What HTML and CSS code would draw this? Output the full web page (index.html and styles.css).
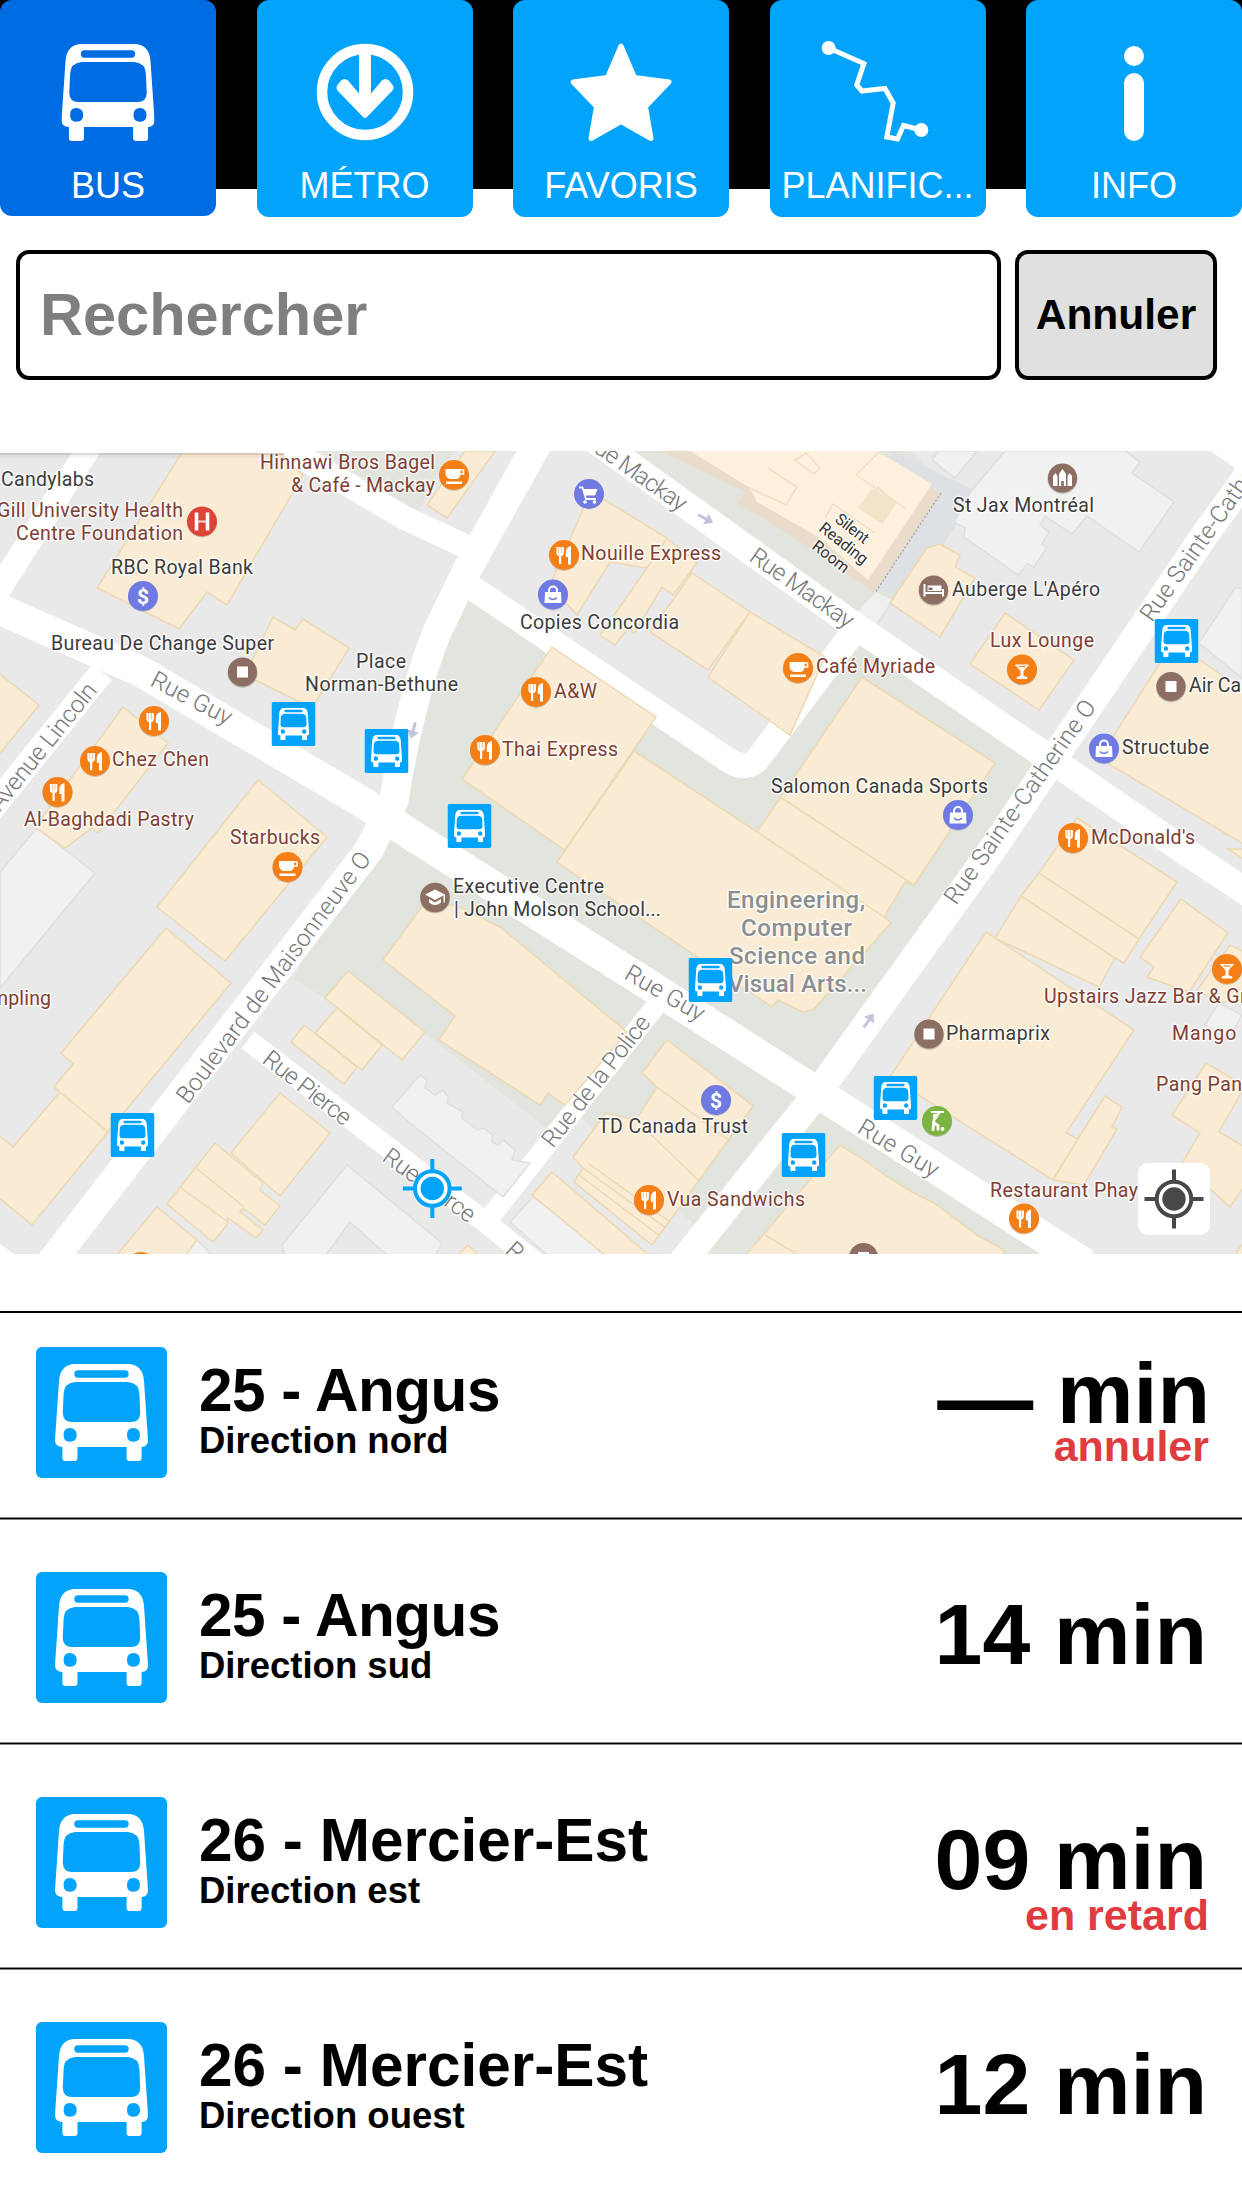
FILE: index.html
```html
<!DOCTYPE html>
<html lang="fr">
<head>
<meta charset="utf-8">
<title>Bus</title>
<link rel="stylesheet" href="styles.css">
</head>
<body>
<svg class="defs" aria-hidden="true">
  <defs>
    <symbol id="bus" viewBox="0 0 93 97">
      <path fill="#fff" fill-rule="evenodd" d="M18 0H75Q88 2 89 17L93 76Q93 83 86.600 83V94Q86.600 97 83.600 97H74.600Q71.600 97 71.600 94V83H22.500V94Q22.500 97 19.500 97H10.400Q7.400 97 7.400 94V83Q0 83 0 76L4 17Q5 2 18 0ZM23 6.300A3.700 3.700 0 0 0 23 13.700H70A3.700 3.700 0 0 0 70 6.300ZM20 18Q9 19 8.600 30L7.800 49Q8 58 17 58H76Q85 58 85.200 49L84.400 30Q84 19 73 18ZM14.500 64Q8.600 64 8.600 71T15 77.700Q21.700 77.700 21.700 71T14.500 64ZM78.500 64Q72 64 72 71T78.500 77.700Q85 77.700 85 71T78.500 64Z"/>
    </symbol>
    <symbol id="stop" viewBox="0 0 131 131">
      <rect width="131" height="131" rx="6" fill="#02a3fb"/>
      <use href="#bus" x="19" y="17" width="93" height="97"/>
    </symbol>
    <symbol id="locate" viewBox="-30 -30 60 60">
      <circle r="19" fill="#fff"/>
      <path d="M0-29.500V-18M0 18V29.500M-29.500 0H-18M18 0H29.500" stroke="currentColor" stroke-width="4"/>
      <circle r="17.300" fill="none" stroke="currentColor" stroke-width="4"/>
      <circle r="11.700" fill="currentColor"/>
    </symbol>
    <g id="fork">
      <circle cy="1" r="15" fill="#b9b2a5" opacity=".7"/><circle r="15" fill="#f57f17"/>
      <path d="M-6.500-8V-2Q-6.500 0-4 0T-1.200-2V-8M-3.900-8V9" stroke="#fff" stroke-width="2.200" fill="none"/>
      <path d="M7-9V9.500H4V2H1.800V-3Q2-8 7-9Z" fill="#fff"/>
    </g>
    <g id="cup">
      <circle cy="1" r="15" fill="#b9b2a5" opacity=".7"/><circle r="15" fill="#f57f17"/>
      <path d="M-8.500-6H6.500V-1Q6 4 2 4H-4Q-8 3-8.500-1ZM-8 6.500H8V9H-8Z" fill="#fff"/>
      <path d="M6-5H9.500V-1H6" fill="none" stroke="#fff" stroke-width="1.600"/>
    </g>
    <g id="drink">
      <circle cy="1" r="15" fill="#b9b2a5" opacity=".7"/><circle r="15" fill="#f57f17"/>
      <path d="M-6.500-4.500H6.500L2.500-.500 1 2V6.500L5 8V9H-5V8L-1 6.500V2L-2.500-.500Z" fill="#fff" stroke="#fff"/>
      <path d="M-3.500-3H3.500" stroke="#f57f17" stroke-width="1.200"/>
    </g>
    <g id="bag">
      <circle cy="1" r="15" fill="#b0b0bd" opacity=".7"/><circle r="15" fill="#6f7be2"/>
      <path d="M-8-2.500H8L8.500 8.500H-8.500Z" fill="#fff"/>
      <path d="M-4-2V-4A4 4 0 0 1 4-4V-2" fill="none" stroke="#fff" stroke-width="2"/>
      <path d="M-4 3Q0 7 4 3" fill="none" stroke="#6f7be2" stroke-width="1.600"/>
    </g>
    <g id="dollar">
      <circle cy="1" r="15" fill="#b0b0bd" opacity=".7"/><circle r="15" fill="#6f7be2"/>
    </g>
    <g id="shop">
      <circle cy="1" r="15" fill="#b0a9a5" opacity=".7"/><circle r="14.600" fill="#8d6e63"/>
      <rect x="-5.500" y="-5.500" width="11" height="11" fill="#fff"/>
    </g>
    <path id="oneway" d="M-9-1.500H0V-6L8 0 0 6V1.500H-9Z" fill="#c3c5dc"/>
  </defs>
</svg>

<nav class="tabs">
  <a class="tab tab--active" href="#">
    <svg class="tab-icon" viewBox="0 0 216 160"><use href="#bus" x="61.500" y="44" width="93" height="97"/></svg>
    <span class="tab-label">BUS</span>
  </a>
  <a class="tab" href="#">
    <svg class="tab-icon" viewBox="0 0 216 160">
      <circle cx="108" cy="92" r="43" fill="none" stroke="#fff" stroke-width="10.500"/>
      <path fill="#fff" d="M102 48H114V93.500L125 80.500Q128.500 77.500 132 80.500L136 85.500Q137.500 88 135.500 90.500L110 117Q108 119 106 117L80.500 90.500Q78.500 88 80 85.500L84 80.500Q87.500 77.500 91 80.500L102 93.500Z"/>
    </svg>
    <span class="tab-label">MÉTRO</span>
  </a>
  <a class="tab" href="#">
    <svg class="tab-icon" viewBox="0 0 216 160">
      <path fill="#fff" stroke="#fff" stroke-width="5" stroke-linejoin="round" d="M108 46L121.500 77.500 156 82 132.500 106.500 138 138.500 108 121.500 78 138.500 83.500 106.500 60 82 94.500 77.500Z"/>
    </svg>
    <span class="tab-label">FAVORIS</span>
  </a>
  <a class="tab" href="#">
    <svg class="tab-icon" viewBox="0 0 216 160">
      <path fill="none" stroke="#fff" stroke-width="5" d="M58.600 48L93.900 63.500 86.700 85 91.900 91 114.900 88.500 123.200 103 116.800 137 127.500 139 133.500 125.500 151.300 130"/>
      <circle cx="58.600" cy="48" r="7" fill="#fff"/><circle cx="151.300" cy="130" r="7" fill="#fff"/>
    </svg>
    <span class="tab-label">PLANIFIC...</span>
  </a>
  <a class="tab" href="#">
    <svg class="tab-icon" viewBox="0 0 216 160">
      <circle cx="108" cy="56" r="10" fill="#fff"/><rect x="98" y="73" width="20" height="68" rx="10" fill="#fff"/>
    </svg>
    <span class="tab-label">INFO</span>
  </a>
</nav>

<form class="search">
  <div class="search-field">Rechercher</div>
  <button class="search-cancel" type="button">Annuler</button>
</form>

<section class="map">
  <svg class="map-canvas" viewBox="0 451 1242 803">
    <rect y="451" width="1242" height="803" fill="#e9e9e9"/>
    <g fill="#e2e4de">
      <path d="M468 590L440 640 415 720 396 800 410 834 657 990 815 1091 1040 752 855 635 757 765 732 761Z"/>
      <path d="M385 815L293 978 325 998 423 1032 545 1127 580 1117 700 1230 690 1254 815 1091 657 990Z"/>
      <path d="M820 1105L700 1254H1060Z"/>
      <path d="M320 451L418 512 440 470 455 451Z"/>
      <path d="M620 451L875 630 960 500 910 451Z"/>
    </g>
    <path fill="#dde1e4" d="M893 451L978 492 912 592H872Z"/>
    <path fill="#f0f0f0" d="M876 592L892 600 875 626 857 612Z"/>

    <g class="road">
      <path stroke-width="31" d="M-10 605L140 671 367 805 410 834 657 990 815 1091 1085 1264"/>
      <path stroke-width="29" d="M45 1270L369 850 394 800Q410 700 437 632L468 568 545 430"/>
      <path stroke-width="24" d="M92 443L3 583-10 605"/>
      <path stroke-width="25" d="M102 672L-10 811"/>
      <path stroke-width="24" d="M285 448L405 518 465 546"/>
      <path stroke-width="25" d="M468 585L728 760Q746 771 757 760L855 630"/>
      <path stroke-width="27" d="M595 440L848 621 1040 752 1183 850 1260 901"/>
      <path stroke-width="28" d="M1270 445L1206 533 1058 752 992 850 826 1081 808 1105 676 1270"/>
      <path stroke-width="20" d="M658 1003L488 1220"/>
      <path stroke-width="21" d="M248 1040L485 1222 540 1266"/>
    </g>
    <path fill="#fff" d="M1210 451H1242V500L1234 467ZM0 1244L14 1254H0Z"/>

    <g class="lot">
      <path d="M1005 451H1125L1140 462 1132 473 1174 502 1139 552 1087 516 1072 534 1045 516 1040 525 1049 532 1042 544 1047 547 1034 567 1027 564 1018 575 964 537 965 528 954 522 972 490Z"/>
      <path d="M939 451L932 460 955 478 977 451Z"/>
      <path d="M1242 588L1235 588 1199 643 1242 678Z"/>
      <path d="M0 872L37 828 95 873 0 988Z"/>
      <path d="M347 1165L442 1243 435 1256H388L350 1222 325 1256H285L282 1245Z"/>
      <path d="M392 1107L420 1075 427 1080 425 1088 435 1095 443 1090 448 1097 447 1103 463 1112 462 1118 478 1130 483 1128 493 1135 492 1142 498 1145 503 1140 515 1150 512 1160 530 1163 503 1197 410 1123Z"/>
      <path d="M533 1197L510 1222 548 1256H612Z"/>
      <path d="M1219 1003L1205 1025 1228 1040 1242 1015Z"/>
      <path d="M197 1240L213 1256H180Z"/>
    </g>

    <g class="building">
      <path d="M183 451H278L303 475 227 605 207 592 179 629 97 588Z"/>
      <path d="M273 617L295 630 303 619 349 648 312 708 245 675Z"/>
      <path d="M-3 672L39 705-3 757Z"/>
      <path d="M123 707L168 743 98 833 92 828 65 848 35 827Z"/>
      <path d="M258 780L327 837 225 961 157 907Z"/>
      <path d="M166 928L231 983 107 1133 54 1087 73 1064 61 1053Z"/>
      <path d="M60 1092L108 1132 32 1225-3 1196V1134L13 1147Z"/>
      <path d="M280 1093L330 1133 280 1196 231 1153Z"/>
      <path d="M215 1143L263 1183 260 1190 280 1206 265 1225 243 1208 240 1212 263 1230 256 1238 228 1218 227 1225 213 1242 167 1204ZM196 1168L243 1206M181 1188L228 1222"/>
      <path d="M157 1207L197 1240 185 1256H116Z"/>
      <path d="M348 971L425 1032 402 1060 325 998Z"/>
      <path d="M337 1008L382 1045 362 1070 315 1033Z"/>
      <path d="M304 1025L357 1067 344 1084 291 1042Z"/>
      <path d="M423 905H455L500 927 627 1032 565 1105 548 1093 540 1105 439 1040 455 1016 383 960Z"/>
      <path d="M667 1040L753 1106 652 1245 574 1182 583 1168 573 1157 606 1113 636 1120 657 1087 642 1073ZM657 1087L730 1141M636 1120L698 1180M583 1168L666 1228M579 1175L660 1236M588 1163L670 1222"/>
      <path d="M552 1172L650 1256H606L532 1195Z"/>
      <path d="M468 1245L457 1256H480Z"/>
      <path d="M840 1145L864 1160 885 1175 910 1191 934 1203 977 1235 1004 1250V1256H745L757 1242ZM765 1235L800 1256"/>
      <path d="M552 647L656 717 565 850 462 779Z"/>
      <path d="M634 751L757 832 862 677 995 763 914 885 905 882 884 917 891 923 822 1000 813 1010 803 1012 778 1000 772 1007 557 862ZM757 832L884 917M780 797L914 885"/>
      <path d="M587 500H605L667 538 697 563 673 595 662 587 634 633 628 628 615 645 600 635 647 568 610 562 577 615 550 585ZM667 538L647 568"/>
      <path d="M692 573L750 612 708 670 650 632Z"/>
      <path d="M750 612L825 657 790 735 708 677Z"/>
      <path d="M465 451H495L447 518 427 505Z"/>
      <path d="M940 544L960 555 955 567 975 578 940 637 890 603 927 548Z"/>
      <path d="M1005 613L1074 660 1039 710 970 664Z"/>
      <path d="M1162 660H1200L1245 692V845L1107 763 1112 738Z"/>
      <path d="M1077 818L1177 882 1139 939 1124 963 1115 958 1099 987 995 938 1021 896 1039 873ZM1039 873L1139 939M1021 896L1115 958"/>
      <path d="M986 932L1134 1030 1066 1133 1078 1139 1053 1180 890 1077Z"/>
      <path d="M1105 1096L1122 1107 1112 1127 1117 1129 1084 1185 1053 1180 1078 1139Z"/>
      <path d="M1181 899L1228 933 1189 992 1147 977 1154 967 1140 957Z"/>
      <path d="M1230 945L1245 952V1000L1219 1003 1197 990Z"/>
      <path d="M1206 1063L1245 1086 1219 1132 1245 1147V1185L1230 1207 1182 1163 1200 1133 1172 1115Z"/>
      <path d="M1245 1240L1234 1256H1245ZM1228 849L1245 860V849Z"/>
    </g>
    <path fill="#e9dccb" d="M660 451L746 492 738 503 813 550 874 593 940 493 877 451Z"/>
    <path fill="#fdf0dc" d="M690 451L750 488 757 502 820 538 868 580 932 484 877 451Z"/>
    <path fill="none" stroke="#efdfc4" stroke-width="1.500" d="M750 488L786 505 797 487 768 468M795 460L806 453 820 468 814 474ZM856 475L880 451M856 475L905 508M868 500L878 487 895 503 883 522ZM825 518L833 504 875 533"/>
    <path fill="none" stroke="#a69f93" stroke-width="1.200" stroke-dasharray="2 2" d="M941 493L875 593"/>
    <path fill="#f3e3c9" d="M872 488L896 503 882 524 858 508Z"/>

    <use href="#oneway" transform="translate(706 519) rotate(28)"/>
    <use href="#oneway" transform="translate(869 1020) rotate(-55)"/>
    <use href="#oneway" transform="translate(413 731) rotate(105)"/>

    <g class="street" transform="translate(-2 0)">
      <text transform="translate(151 685) rotate(27.500)" textLength="88">Rue Guy</text>
      <text transform="translate(625 978) rotate(30)" textLength="88">Rue Guy</text>
      <text transform="translate(858 1132) rotate(31)" textLength="90">Rue Guy</text>
      <text transform="translate(263 1062) rotate(38)" textLength="105">Rue Pierce</text>
      <text transform="translate(383 1160) rotate(36)" textLength="108">Rue Pierce</text>
      <text transform="translate(506 1252) rotate(42)" textLength="105">Rue Pierce</text>
      <text transform="translate(190 1105) rotate(-53.200)" textLength="307">Boulevard de Maisonneuve O</text>
      <text transform="translate(2 812) rotate(-51)" textLength="156">Avenue Lincoln</text>
      <text transform="translate(555 1149) rotate(-52)" textLength="160">Rue de la Police</text>
      <text transform="translate(958 906) rotate(-54.700)" textLength="244">Rue Sainte-Catherine O</text>
      <text transform="translate(1154 623) rotate(-54.700)" textLength="243">Rue Sainte-Catherine O</text>
      <text transform="translate(750 560) rotate(35)" textLength="121">Rue Mackay</text>
      <text transform="translate(583 443) rotate(35)" textLength="121">Rue Mackay</text>
    </g>

    <g class="poi">
      <text x="1" y="486" textLength="93">Candylabs</text>
      <text x="111" y="574" textLength="142">RBC Royal Bank</text>
      <text x="51" y="650" textLength="223">Bureau De Change Super</text>
      <text x="356" y="668" textLength="50">Place</text>
      <text x="305" y="691" textLength="153">Norman-Bethune</text>
      <text x="520" y="629" textLength="159">Copies Concordia</text>
      <text x="953" y="512" textLength="141">St Jax Montréal</text>
      <text x="952" y="596" textLength="148">Auberge L'Apéro</text>
      <text x="771" y="793" textLength="217">Salomon Canada Sports</text>
      <text x="1122" y="754" textLength="87">Structube</text>
      <text x="1189" y="692" textLength="95">Air Canada</text>
      <text x="453" y="893" textLength="151">Executive Centre</text>
      <text x="454" y="916" textLength="207">| John Molson School...</text>
      <text x="598" y="1133" textLength="150">TD Canada Trust</text>
      <text x="946" y="1040" textLength="104">Pharmaprix</text>
    </g>
    <g class="poi poi--food">
      <text x="-3" y="517" textLength="186">Gill University Health</text>
      <text x="16" y="540" textLength="167">Centre Foundation</text>
      <text x="112" y="766" textLength="97">Chez Chen</text>
      <text x="24" y="826" textLength="170">Al-Baghdadi Pastry</text>
      <text x="230" y="844" textLength="90">Starbucks</text>
      <text x="260" y="469" textLength="175">Hinnawi Bros Bagel</text>
      <text x="291" y="492" textLength="144">&amp; Café - Mackay</text>
      <text x="581" y="560" textLength="140">Nouille Express</text>
      <text x="554" y="698" textLength="43">A&amp;W</text>
      <text x="502" y="756" textLength="116">Thai Express</text>
      <text x="990" y="647" textLength="104">Lux Lounge</text>
      <text x="816" y="673" textLength="119">Café Myriade</text>
      <text x="1091" y="844" textLength="104">McDonald's</text>
      <text x="-9" y="1005" textLength="60">mpling</text>
      <text x="667" y="1206" textLength="138">Vua Sandwichs</text>
      <text x="1044" y="1003" textLength="213">Upstairs Jazz Bar &amp; Gril</text>
      <text x="1172" y="1040" textLength="83">Mango R</text>
      <text x="1156" y="1091" textLength="86">Pang Pan</text>
      <text x="990" y="1197" textLength="148">Restaurant Phay</text>
    </g>
    <g class="campus">
      <text x="727" y="908" textLength="138">Engineering,</text>
      <text x="741" y="936" textLength="111">Computer</text>
      <text x="729" y="964" textLength="136">Science and</text>
      <text x="728" y="992" textLength="139">Visual Arts...</text>
    </g>
    <g class="room">
      <text transform="translate(834 521) rotate(38)" textLength="38">Silent</text>
      <text transform="translate(818 530) rotate(38)" textLength="57">Reading</text>
      <text transform="translate(811 548) rotate(38)" textLength="42">Room</text>
    </g>

    <use href="#fork" x="154" y="721"/><use href="#fork" x="95" y="761"/><use href="#fork" x="57.500" y="792"/>
    <use href="#fork" x="564" y="555"/><use href="#fork" x="536" y="692"/><use href="#fork" x="485" y="750"/>
    <use href="#fork" x="1073" y="838"/><use href="#fork" x="649" y="1200"/><use href="#fork" x="1024" y="1218.500"/>
    <use href="#fork" x="141" y="1267"/>
    <use href="#cup" x="454" y="475"/><use href="#cup" x="798" y="668"/><use href="#cup" x="287.500" y="867"/>
    <use href="#drink" x="1022" y="669.500"/><use href="#drink" x="1227" y="969"/>
    <use href="#bag" x="553" y="594.500"/><use href="#bag" x="1104" y="748.500"/><use href="#bag" x="958" y="815"/>
    <use href="#dollar" x="143" y="596"/><text class="glyph" x="143" y="603.500" text-anchor="middle">$</text>
    <use href="#dollar" x="716" y="1100"/><text class="glyph" x="716" y="1107.500" text-anchor="middle">$</text>
    <use href="#shop" x="242.500" y="672"/><use href="#shop" x="1171" y="686.500"/><use href="#shop" x="929" y="1034"/><use href="#shop" x="863.500" y="1257.500"/>
    <g transform="translate(202 521.500)">
      <circle cy="1" r="15" fill="#b0a9a5" opacity=".7"/><circle r="15" fill="#db4437"/>
      <path d="M-5.500-9V9M5.500-9V9" stroke="#fff" stroke-width="3.600"/><path d="M-5 0H5" stroke="#fff" stroke-width="2" opacity=".8"/>
    </g>
    <g transform="translate(589 494)">
      <circle r="15" fill="#6f7be2"/>
      <path d="M-6-5H8.500L6 1.500H-4Z" fill="#fff"/><path d="M-10-6.500H-6.500L-3 5H7" fill="none" stroke="#fff" stroke-width="1.800"/>
      <circle cx="-4" cy="8" r="1.800" fill="#fff"/><circle cx="5.500" cy="8" r="1.800" fill="#fff"/>
    </g>
    <g transform="translate(1062.500 478)">
      <circle cy="1" r="15" fill="#b0a9a5" opacity=".7"/><circle r="14.600" fill="#8d6e63"/>
      <path d="M-9.500 8V-2L-7-5-5 -2V8ZM-3.500 8V-4L0-9 3.500-4V8H1.300V3H-1.300V8ZM5 8V-2L7-5 9.500-2V8Z" fill="#fff"/>
    </g>
    <g transform="translate(933.500 590)">
      <circle cy="1" r="15" fill="#b0a9a5" opacity=".7"/><circle r="14.600" fill="#8d6e63"/>
      <path d="M-9-6V6.500M-9 3H9.500M9.500-1V6.500" stroke="#fff" stroke-width="2" fill="none"/>
      <path d="M-6-4.500H8V1H-6Z" fill="#fff"/><path d="M-5-2.500H-1V0H-5Z" fill="#8d6e63"/>
    </g>
    <g transform="translate(435 897.500)">
      <circle cy="1" r="15" fill="#b0a9a5" opacity=".7"/><circle r="14.800" fill="#8d6e63"/>
      <path d="M-10-3L0-8 10-3V5H8.500V-2L0 2.500ZM-6 1.500L0 5 6 1.500V5Q0 10-6 5Z" fill="#fff"/>
    </g>
    <g transform="translate(937 1121)">
      <circle cy="1" r="15" fill="#a9b0a0" opacity=".7"/><circle r="15" fill="#7cb342"/>
      <circle cx="-2" cy="-5" r="2.300" fill="#fff"/><circle cx="5.500" cy="8" r="1.900" fill="#fff"/>
      <path d="M-6-9H7" stroke="#fff" stroke-width="2"/><path d="M2-8L-3-1-3.500 3-4 10M-3 2L1 4.500 1 9.500" stroke="#fff" stroke-width="2.800" fill="none"/>
    </g>

    <g class="stops">
      <use href="#stop" x="271.500" y="702" width="44" height="44"/>
      <use href="#stop" x="364.500" y="729" width="44" height="44"/>
      <use href="#stop" x="447.500" y="804" width="44" height="44"/>
      <use href="#stop" x="688.500" y="958" width="44" height="44"/>
      <use href="#stop" x="781.500" y="1133" width="44" height="44"/>
      <use href="#stop" x="873.500" y="1076" width="44" height="44"/>
      <use href="#stop" x="110.500" y="1113" width="44" height="44"/>
      <use href="#stop" x="1154.500" y="619" width="44" height="44"/>
    </g>
    <use class="me" href="#locate" x="402.300" y="1158.500" width="60" height="60"/>
    <path fill="#fff" d="M0 451H285V453H0Z"/>
    <path fill="#000" opacity=".14" d="M0 453H285V455H0Z"/>
    <path fill="#000" opacity=".04" d="M0 455H285V458H0Z"/>
  </svg>
  <button class="locate" type="button" aria-label="Me localiser"><svg class="locate-icon"><use href="#locate"/></svg></button>
</section>

<ul class="departures">
  <li class="departure departure--first">
    <svg class="departure-icon"><use href="#stop"/></svg>
    <div class="route"><div class="route-name route-name--tight">25 - Angus</div><div class="route-direction">Direction nord</div></div>
    <div class="eta eta--cancelled"><div class="eta-time"><span class="eta-none">—</span> min</div><div class="eta-note">annuler</div></div>
  </li>
  <li class="departure">
    <svg class="departure-icon"><use href="#stop"/></svg>
    <div class="route"><div class="route-name route-name--tight">25 - Angus</div><div class="route-direction">Direction sud</div></div>
    <div class="eta"><div class="eta-time">14 min</div></div>
  </li>
  <li class="departure">
    <svg class="departure-icon"><use href="#stop"/></svg>
    <div class="route"><div class="route-name">26 - Mercier-Est</div><div class="route-direction">Direction est</div></div>
    <div class="eta"><div class="eta-time">09 min</div><div class="eta-note">en retard</div></div>
  </li>
  <li class="departure">
    <svg class="departure-icon"><use href="#stop"/></svg>
    <div class="route"><div class="route-name">26 - Mercier-Est</div><div class="route-direction">Direction ouest</div></div>
    <div class="eta"><div class="eta-time">12 min</div></div>
  </li>
</ul>
</body>
</html>
```
FILE: styles.css
```css
* { box-sizing: border-box; }

body {
  margin: 0;
  width: 1242px;
  height: 2208px;
  overflow: hidden;
  background: #fff;
  color: #000;
  font-family: "Arial Rounded MT Bold", "Liberation Sans", Arial, sans-serif;
  font-weight: 700;
}

.defs { display: block; width: 0; height: 0; }

/* Tab bar */
.tabs {
  display: flex;
  justify-content: space-between;
  height: 217px;
  background: linear-gradient(#000 189px, transparent 189px);
}
.tab {
  display: flex;
  flex-direction: column;
  align-items: center;
  width: 216px;
  height: 216.500px;
  border-radius: 12px;
  background: #02a3fb;
  color: #fff;
  text-decoration: none;
}
.tab--active { height: 216px; background: #006ce2; }
.tab-icon { width: 216px; height: 160px; }
.tab-label {
  font: 400 36px/40px "Liberation Sans", Arial, sans-serif;
  margin-top: 6px;
}

/* Search */
.search {
  display: flex;
  gap: 14px;
  padding: 33px 25px 0 16px;
  height: 234px;
}
.search-field,
.search-cancel {
  height: 130px;
  border: 4px solid #000;
  border-radius: 13px;
}
.search-field {
  flex: 1;
  padding: 1px 0 0 20px;
  font-size: 59.500px;
  line-height: 119px;
  color: #7f7f7f;
}
.search-cancel {
  width: 202px;
  padding: 0;
  background: #e0e0e0;
  color: #000;
  font: inherit;
  font-size: 42.500px;
}

/* Map */
.map { position: relative; height: 803px; }
.map-canvas { display: block; width: 1242px; height: 803px; }
.road { fill: none; stroke: #fff; }
.building { fill: #faecd4; stroke: #ecd9b3; stroke-width: 1.500; }
.lot { fill: #f1f1f1; stroke: #dfdfdf; stroke-width: 1.500; }
.map-canvas text {
  font-family: Roboto, sans-serif;
  font-weight: 400;
  paint-order: stroke;
  stroke: rgba(255, 255, 255, .75);
  stroke-width: 3px;
  stroke-linejoin: round;
}
.street text { font-size: 24px; font-weight: 300; fill: #777; }
.poi text { font-size: 19.500px; fill: #3c3c3c; }
.poi--food text { fill: #7f4033; }
.campus text { font-size: 24px; font-weight: 500; fill: #8b8f92; }
.room text { font-size: 16px; fill: #333; }
.map-canvas .glyph { font-size: 21px; font-weight: 700; fill: #fff; stroke: none; }
.me { color: #02a3fb; }
.locate {
  position: absolute;
  right: 32px;
  bottom: 19px;
  display: flex;
  align-items: center;
  justify-content: center;
  width: 72px;
  height: 72px;
  padding: 0;
  border: 0;
  border-radius: 10px;
  background: #fff;
  color: #484848;
}
.locate-icon { width: 60px; height: 60px; }

/* Departures */
.departures { margin: 57px 0 0; padding: 0; list-style: none; }
.departure {
  display: flex;
  height: 225px;
  padding: 55px 35px 0 36px;
  background: linear-gradient(#888 1px, #000 1px, #000 2px, #888 2px, #888 3px, transparent 3px);
}
.departure--first {
  height: 206px;
  padding-top: 36px;
  background: linear-gradient(#000 2px, transparent 2px);
}
.departure-icon { flex: none; width: 131px; height: 131px; }
.route { flex: 1; padding: 9px 0 0 32px; white-space: nowrap; }
.route-name { font-size: 60.300px; line-height: 68px; }
.route-name--tight { letter-spacing: -.5px; }
.route-direction { font-size: 36.500px; line-height: 34px; }
.eta { padding-top: 17px; text-align: right; white-space: nowrap; }
.eta-time { font-size: 86px; line-height: 90px; }
.eta-note {
  margin: -4px -2px 0 0;
  color: #e03c3f;
  font-size: 43px;
  line-height: 30px;
}
.eta--cancelled { padding-top: 1px; margin-right: -3px; }
.eta--cancelled .eta-note { margin: -7px 1px 0 0; }
.eta-none { font-size: 96px; line-height: 0; vertical-align: -8px; }
```
